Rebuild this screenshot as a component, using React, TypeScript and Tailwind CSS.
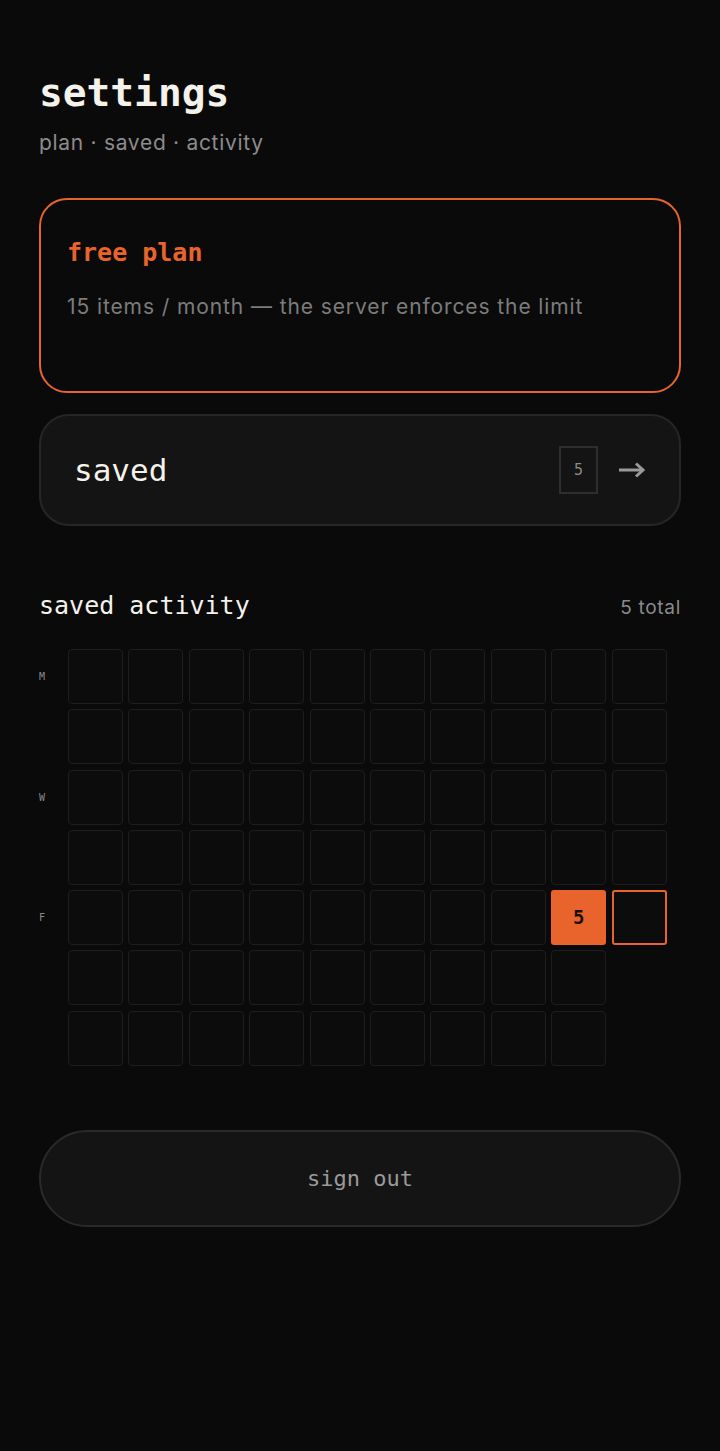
const mono = "font-['DejaVu_Sans_Mono','Liberation_Mono',monospace]"
const sans = "font-['Inter','Noto_Sans',sans-serif]"

const DAYS = ['M', '', 'W', '', 'F', '', '']
const WEEKS = 10

// which cells exist: last week stops at friday
function cellState(row: number, col: number) {
  if (col === WEEKS - 1 && row > 4) return 'none'
  if (col === 8 && row === 4) return 'hit'
  if (col === WEEKS - 1 && row === 4) return 'today'
  return 'empty'
}

function ActivityGrid() {
  return (
    <div className="flex flex-col gap-y-[5.3px]">
      {DAYS.map((day, row) => (
        <div key={row} className="flex items-center">
          <span className={`${mono} w-[29px] text-[10px] text-[#8a8a8a]`}>{day}</span>
          <div className="flex gap-x-[5.4px]">
            {Array.from({ length: WEEKS }).map((_, col) => {
              const state = cellState(row, col)
              if (state === 'none') return <div key={col} className="h-[55px] w-[55px]" />
              if (state === 'hit')
                return (
                  <div
                    key={col}
                    className={`${mono} flex h-[55px] w-[55px] items-center justify-center rounded-[3px] bg-[#e8642c] text-[19px] font-bold text-[#1a0d06]`}
                  >
                    5
                  </div>
                )
              if (state === 'today')
                return <div key={col} className="h-[55px] w-[55px] rounded-[3px] border-2 border-[#e8642c] bg-[#0c0c0c]" />
              return <div key={col} className="h-[55px] w-[55px] rounded-[4px] border border-[#1e1e1e] bg-[#0c0c0c]" />
            })}
          </div>
        </div>
      ))}
    </div>
  )
}

function Arrow() {
  return (
    <svg viewBox="0 0 28 20" className="h-[20px] w-[28px] text-[#9a9a9a]" fill="none" stroke="currentColor" strokeWidth={3}>
      <path d="M1 10h24" />
      <path d="M18 3.5l7 6.5-7 6.5" strokeLinejoin="miter" />
    </svg>
  )
}

export default function App() {
  return (
    <div className="min-h-[1451px] w-full bg-[#0a0a0a] px-[39px] pt-[68px]">
      <header>
        <h1 className={`${mono} text-[39.5px] font-bold leading-[48px] text-[#f4f2ea]`}>settings</h1>
        <p className={`${sans} mt-[14px] text-[21px] leading-[26px] tracking-[0.7px] text-[#8c8c8c]`}>
          plan · saved · activity
        </p>
      </header>

      <section className="mt-[42px] h-[195px] rounded-[28px] border-2 border-[#e8642c] px-[26px] pt-[36px]">
        <h2 className={`${mono} text-[25px] font-bold leading-[34px] text-[#e8642c]`}>free plan</h2>
        <p className={`${sans} mt-[23px] text-[21px] leading-[28px] tracking-[0.9px] text-[#7c7c7c]`}>
          15 items / month — the server enforces the limit
        </p>
      </section>

      <button className="mt-[21px] flex h-[112px] w-full items-center justify-between rounded-[30px] border-2 border-[#262626] bg-[#141414] pl-[33px] pr-[33px]">
        <span className={`${mono} text-[31px] text-[#f4f2ea]`}>saved</span>
        <span className="flex items-center gap-[20px]">
          <span
            className={`${mono} flex h-[48px] w-[39px] items-center justify-center border-2 border-[#2e2e2e] text-[15px] text-[#8a8a8a]`}
          >
            5
          </span>
          <Arrow />
        </span>
      </button>

      <section className="mt-[63px]">
        <div className="flex items-baseline justify-between">
          <h2 className={`${mono} text-[25px] leading-[34px] text-[#f4f2ea]`}>saved activity</h2>
          <span className={`${sans} text-[19px] tracking-[0.7px] text-[#8a8a8a]`}>5 total</span>
        </div>
        <div className="mt-[26px]">
          <ActivityGrid />
        </div>
      </section>

      <button
        className={`${mono} mt-[64px] flex h-[97px] w-full items-center justify-center rounded-full border-2 border-[#2a2a2a] bg-[#141414] text-[22px] text-[#9a9a9a]`}
      >
        sign out
      </button>
    </div>
  )
}
